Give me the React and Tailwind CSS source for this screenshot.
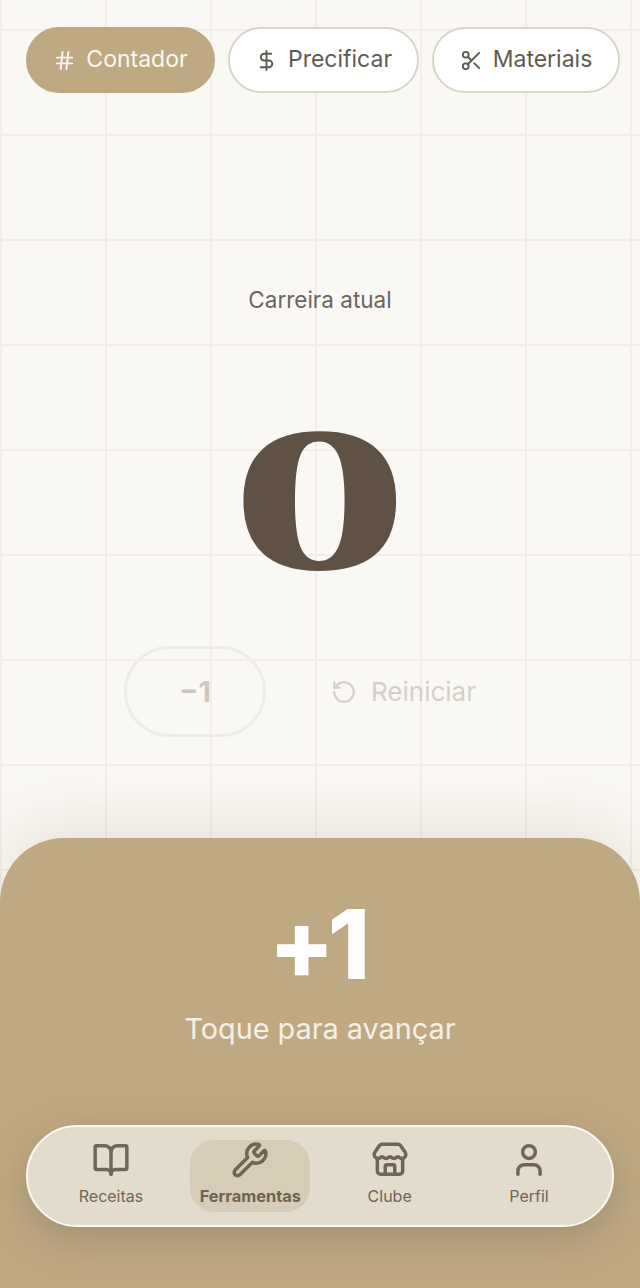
import React from "react";
import { Hash, DollarSign, Scissors, RotateCcw, BookOpen, Wrench, Store, User } from "lucide-react";

const font = "font-['Inter','Noto_Sans',sans-serif]";

function Tab({ icon: Icon, label, active, width }) {
  return (
    <div
      className={`flex items-center justify-center gap-[10px] h-[66px] rounded-full border-2 text-[23px] leading-[30px] ${width} ${
        active
          ? "bg-[#bfa983] border-[#bfa983] text-[#fbf8f2]"
          : "bg-white border-[#d9d5c6] text-[#5f5a52]"
      }`}
    >
      <Icon size={23} strokeWidth={2} />
      <span className="-translate-y-[1px]">{label}</span>
    </div>
  );
}

function NavItem({ icon: Icon, label, active }) {
  return (
    <div
      className={`flex flex-col items-center justify-start w-[120px] h-[72px] rounded-[24px] pt-[1px] gap-[7px] ${
        active ? "bg-[#d6ccb8] text-[#6f6350] font-bold" : "text-[#6f6656]"
      }`}
    >
      <Icon size={38} strokeWidth={2.2} className="text-[#6f6656]" />
      <span className={`${active ? "text-[16.4px]" : "text-[16px]"} leading-[20px] whitespace-nowrap`}>{label}</span>
    </div>
  );
}

export default function App() {
  return (
    <div
      className={`${font} relative flex flex-col w-[640px] h-[1288px] overflow-hidden bg-[#faf8f4] bg-[linear-gradient(to_right,#f1eee8_2px,transparent_2px),linear-gradient(to_bottom,#f1eee8_2px,transparent_2px)] bg-[size:105px_105px] bg-[position:0px_29px]`}
    >
      <div className="flex gap-[13px] pl-[26px] pt-[27px]">
        <Tab icon={Hash} label="Contador" active width="w-[189px]" />
        <Tab icon={DollarSign} label="Precificar" width="w-[191px]" />
        <Tab icon={Scissors} label="Materiais" width="w-[188px]" />
      </div>

      <div className="flex flex-col items-center">
        <p className="mt-[192px] text-[22.5px] leading-[30px] text-[#6b665d]">Carreira atual</p>
        <div className="mt-[90px] h-[190px] flex items-center justify-center font-['Liberation_Serif',serif] font-bold text-[207px] leading-[190px] text-[#5f5244] scale-x-[1.74]">
          0
        </div>
        <div className="flex items-center self-start ml-[124px] mt-[51px]">
          <div className="flex items-center justify-center w-[142px] h-[91px] rounded-full border-[3px] border-[#eeece6] text-[29px] font-bold text-[#cdc9c0]">
            −1
          </div>
          <div className="flex items-center gap-[14px] ml-[65px] text-[26px] text-[#d3d0c9]">
            <RotateCcw size={26} strokeWidth={2} />
            <span>Reiniciar</span>
          </div>
        </div>
      </div>

      <div className="mt-auto h-[450px] rounded-t-[64px] bg-[#bfa983] shadow-[0_-20px_50px_rgba(140,120,90,0.14)] flex flex-col items-center text-white">
        <div className="mt-[48px] mr-[8px] text-[96px] leading-[116px] font-extrabold tracking-[-0.07em]">+1</div>
        <div className="mt-[8px] text-[28.8px] leading-[38px] text-[#f6f0e6]">Toque para avançar</div>
        <div className="mt-auto mb-[61px] w-[588px] h-[102px] rounded-[51px] border-2 border-[#fbf8f2] bg-[#e3dbcc] shadow-[0_12px_36px_rgba(95,82,68,0.28)] flex items-center justify-between px-[23px]">
          <NavItem icon={BookOpen} label="Receitas" />
          <NavItem icon={Wrench} label="Ferramentas" active />
          <NavItem icon={Store} label="Clube" />
          <NavItem icon={User} label="Perfil" />
        </div>
      </div>
    </div>
  );
}
